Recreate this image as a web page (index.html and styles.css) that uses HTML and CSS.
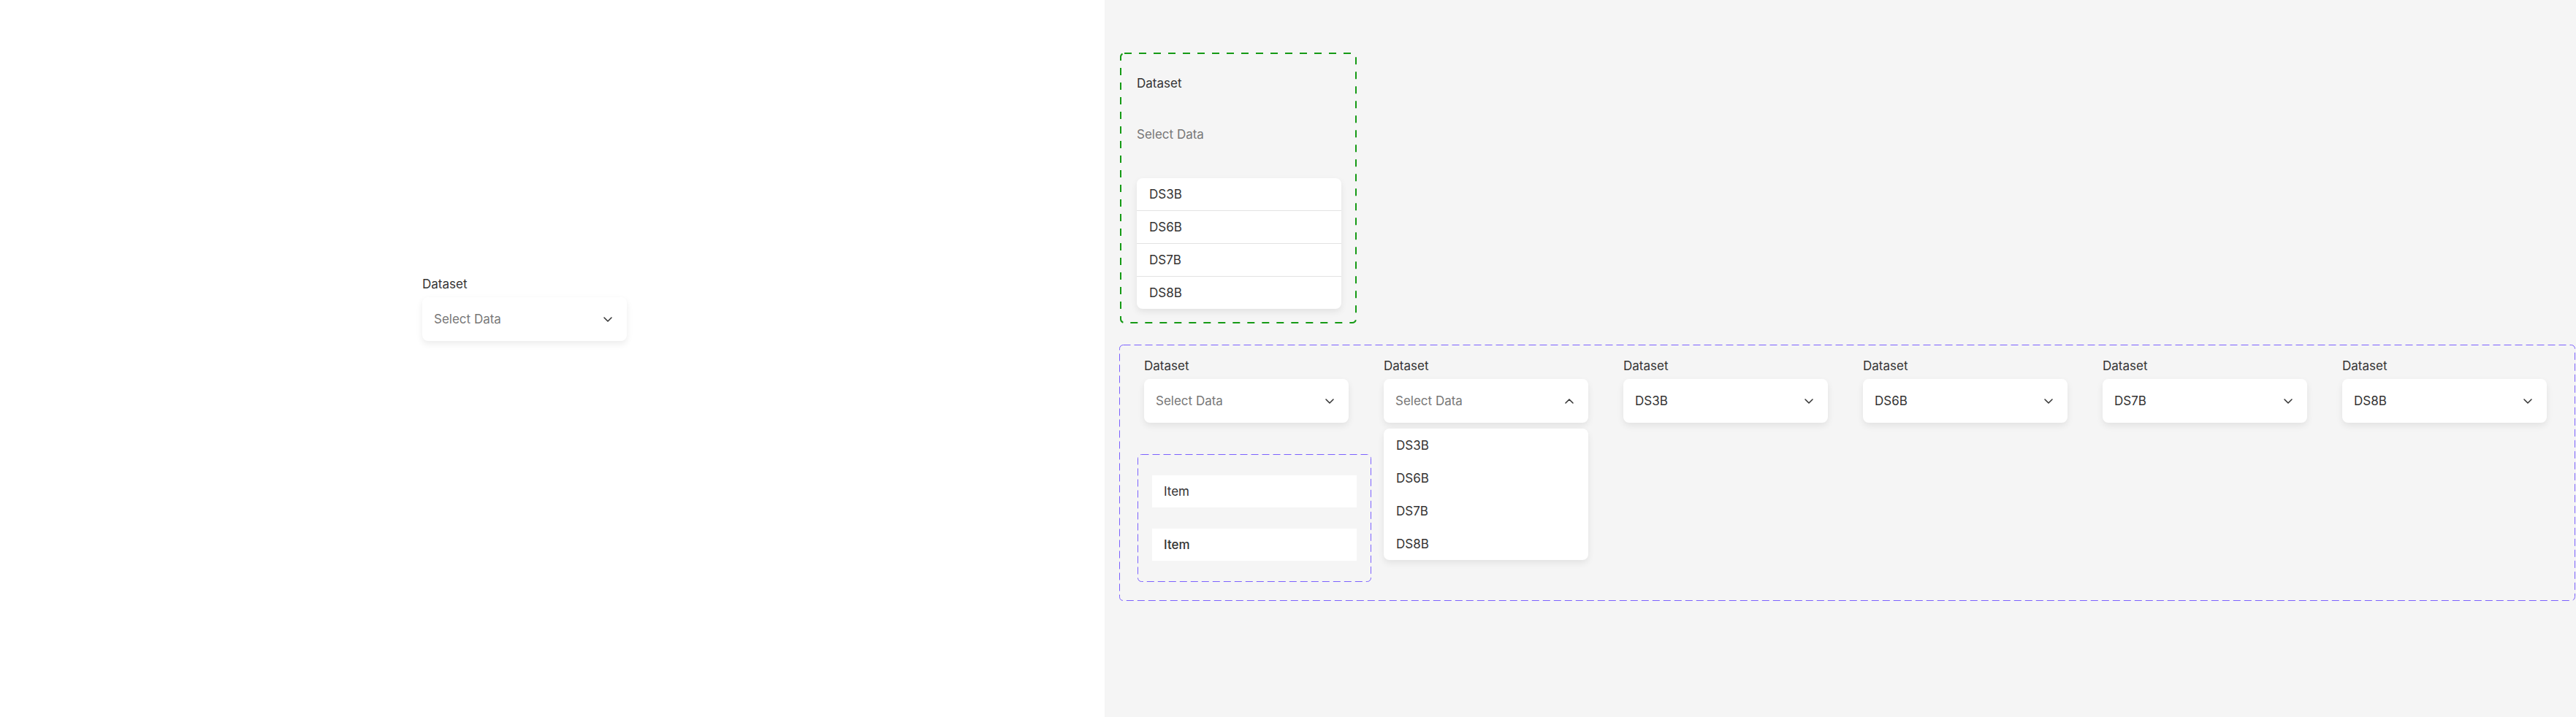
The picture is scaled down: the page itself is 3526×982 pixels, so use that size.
FILE: index.html
```html
<!DOCTYPE html>
<html lang="en">
<head>
	<meta charset="UTF-8">
	<meta name="viewport" content="width=device-width, initial-scale=1.0">
	<title>Dataset Select</title>
	<link rel="stylesheet" href="styles.css">
</head>
<body>
	<div class="canvas">

		<!-- preview -->
		<div class="preview">
			<div class="field">
				<label class="field-label">Dataset</label>
				<div class="select">
					<span class="placeholder">Select Data</span>
					<svg class="chevron" width="12" height="7" viewBox="0 0 12 7"><path d="M1 1l5 5 5-5"/></svg>
				</div>
			</div>
		</div>

		<!-- components -->
		<div class="board">

			<div class="base-set">
				<svg class="dash"><rect class="dash-green"/></svg>
				<span class="field-label">Dataset</span>
				<div class="bare-trigger"><span class="placeholder">Select Data</span></div>
				<ul class="options divided">
					<li>DS3B</li>
					<li>DS6B</li>
					<li>DS7B</li>
					<li>DS8B</li>
				</ul>
			</div>

			<div class="variant-set">
				<svg class="dash"><rect class="dash-purple"/></svg>

				<div class="col">
					<div class="field">
						<span class="field-label">Dataset</span>
						<div class="select">
							<span class="placeholder">Select Data</span>
							<svg class="chevron" width="12" height="7" viewBox="0 0 12 7"><path d="M1 1l5 5 5-5"/></svg>
						</div>
					</div>
					<div class="item-set">
						<svg class="dash"><rect class="dash-purple"/></svg>
						<div class="item">Item</div>
						<div class="item item-strong">Item</div>
					</div>
				</div>

				<div class="col">
					<div class="field">
						<span class="field-label">Dataset</span>
						<div class="select">
							<span class="placeholder">Select Data</span>
							<svg class="chevron" width="12" height="7" viewBox="0 0 12 7"><path d="M1 6l5-5 5 5"/></svg>
						</div>
					</div>
					<ul class="options open">
						<li>DS3B</li>
						<li>DS6B</li>
						<li>DS7B</li>
						<li>DS8B</li>
					</ul>
				</div>

				<div class="col">
					<div class="field">
						<span class="field-label">Dataset</span>
						<div class="select">
							<span class="value">DS3B</span>
							<svg class="chevron" width="12" height="7" viewBox="0 0 12 7"><path d="M1 1l5 5 5-5"/></svg>
						</div>
					</div>
				</div>

				<div class="col">
					<div class="field">
						<span class="field-label">Dataset</span>
						<div class="select">
							<span class="value">DS6B</span>
							<svg class="chevron" width="12" height="7" viewBox="0 0 12 7"><path d="M1 1l5 5 5-5"/></svg>
						</div>
					</div>
				</div>

				<div class="col">
					<div class="field">
						<span class="field-label">Dataset</span>
						<div class="select">
							<span class="value">DS7B</span>
							<svg class="chevron" width="12" height="7" viewBox="0 0 12 7"><path d="M1 1l5 5 5-5"/></svg>
						</div>
					</div>
				</div>

				<div class="col">
					<div class="field">
						<span class="field-label">Dataset</span>
						<div class="select">
							<span class="value">DS8B</span>
							<svg class="chevron" width="12" height="7" viewBox="0 0 12 7"><path d="M1 1l5 5 5-5"/></svg>
						</div>
					</div>
				</div>
			</div>

		</div>
	</div>
</body>
</html>
```

FILE: styles.css
```css
body {
	margin: 0;
	font-family: Inter, "Noto Sans", sans-serif;
	font-size: 17px;
	line-height: 20px;
	color: #333;
}

.canvas {
	display: flex;
	min-height: 982px;
}

.preview {
	width: 1512px;
	box-sizing: border-box;
	background-color: #fff;
	padding: 379px 0 0 578px;
}

.board {
	flex: 1;
	background-color: #f5f5f5;
	padding: 72px 0 0 20px;
	display: flex;
	flex-direction: column;
	align-items: flex-start;
	gap: 29px;
}

/* dashed frames */
.dash {
	position: absolute;
	left: 0;
	top: 0;
	width: 100%;
	height: 100%;
	overflow: visible;
	pointer-events: none;
}

.dash rect {
	fill: none;
}

.dash-green {
	x: 1px;
	y: 1px;
	width: calc(100% - 2px);
	height: calc(100% - 2px);
	rx: 5px;
	stroke: #159a15;
	stroke-width: 2;
	stroke-dasharray: 10 10;
}

.dash-purple {
	x: 0.5px;
	y: 0.5px;
	width: calc(100% - 1px);
	height: calc(100% - 1px);
	rx: 5px;
	stroke: #7b61ff;
	stroke-width: 1;
	stroke-dasharray: 10 5;
}

/* field */
.field {
	width: 280px;
}

.field-label {
	display: block;
	margin-bottom: 8px;
	color: #333;
}

.select {
	height: 60px;
	box-sizing: border-box;
	padding: 0 20px 0 16px;
	display: flex;
	align-items: center;
	justify-content: space-between;
	background-color: #fff;
	border-radius: 8px;
	box-shadow: 0 4px 10px rgba(0, 0, 0, 0.08);
}

.placeholder {
	color: #777;
}

.value {
	color: #333;
}

.chevron {
	fill: none;
	stroke: #333;
	stroke-width: 1.5;
	stroke-linecap: round;
	stroke-linejoin: round;
}

/* base component */
.base-set {
	position: relative;
	margin-left: 1px;
	width: 324px;
	box-sizing: border-box;
	padding: 32px 21px 20px 23px;
	display: flex;
	flex-direction: column;
}

.base-set .field-label {
	margin-bottom: 0;
}

.bare-trigger {
	height: 60px;
	margin: 30px 0;
	display: flex;
	align-items: center;
}

.options {
	list-style: none;
	margin: 0;
	padding: 0;
	width: 280px;
	background-color: #fff;
	border-radius: 8px;
	box-shadow: 0 4px 10px rgba(0, 0, 0, 0.08);
}

.options li {
	height: 44px;
	display: flex;
	align-items: center;
	padding-left: 17px;
	color: #333;
}

.options.divided li + li {
	border-top: 1px solid #e2e2e2;
}

.options.open {
	margin-top: 8px;
}

.options.open li {
	height: 45px;
}

/* variants */
.variant-set {
	position: relative;
	display: flex;
	align-items: flex-start;
	gap: 48px;
	padding: 19px 39px 26px 34px;
}

.col {
	width: 280px;
	display: flex;
	flex-direction: column;
}

.item-set {
	position: relative;
	width: 320px;
	box-sizing: border-box;
	margin: 43px 0 0 -9px;
	padding: 29px 20px;
	display: flex;
	flex-direction: column;
	gap: 29px;
}

.item {
	height: 44px;
	display: flex;
	align-items: center;
	padding-left: 16px;
	background-color: #fff;
	color: #333;
}

.item-strong {
	font-weight: 500;
}
```
